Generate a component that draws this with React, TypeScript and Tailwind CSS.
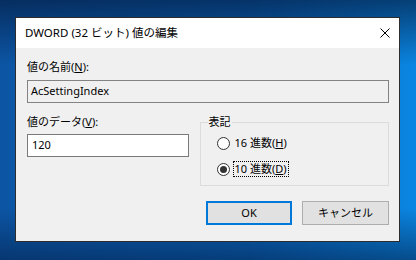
import React from 'react'

const FONT = { fontFamily: '"Noto Sans", "Noto Sans CJK JP", sans-serif' }

function Radio({ checked, label, accel, focused }: { checked?: boolean; label: string; accel: string; focused?: boolean }) {
  return (
    <div className="flex h-[16px] items-center pl-[16px]">
      <div className="flex h-[13px] w-[13px] items-center justify-center rounded-full border border-[#333333] bg-white">
        {checked && <div className="h-[7px] w-[7px] rounded-full bg-[#333333]" />}
      </div>
      <span
        className={`ml-[3px] px-[1px] leading-[14px] border border-dotted ${
          focused ? 'border-black' : 'border-transparent'
        }`}
      >
        {label}(<span className="underline">{accel}</span>)
      </span>
    </div>
  )
}

export default function App() {
  return (
    <div
      className="h-[260px] w-[416px] overflow-hidden pl-[15px] pt-[17px] text-[11px] text-black bg-[linear-gradient(to_bottom,rgba(3,25,60,0.65),rgba(3,25,60,0)_25%,rgba(3,25,60,0)_80%,rgba(3,30,70,0.55)),linear-gradient(to_right,#0c55a4,#0a64bb_60%,#0a86e2)]"
      style={FONT}
    >
      <div className="flex h-[225px] w-[385px] flex-col border border-[#2d2d2d] bg-[#f0f0f0]">
        {/* Title bar */}
        <div className="flex h-[30px] items-center justify-between bg-white pl-[9px] pr-[9px]">
          <span className="text-[11.5px]">DWORD (32 ビット) 値の編集</span>
          <svg width="10" height="10" viewBox="0 0 10 10">
            <path d="M0.5 0.5L9.5 9.5M9.5 0.5L0.5 9.5" stroke="#000" strokeWidth="1" fill="none" />
          </svg>
        </div>

        {/* Body */}
        <div className="flex-1 pl-[11px] pr-[10px] pt-[11px]">
          <div className="leading-4">
            値の名前(<span className="underline">N</span>):
          </div>
          <div className="mt-[5px] flex h-[23px] w-[362px] items-center border border-[#838383] bg-[#f0f0f0] pl-[3px]">
            AcSettingIndex
          </div>

          <div className="mt-[11px] flex items-start">
            <div className="w-[162px]">
              <div className="leading-4">
                値のデータ(<span className="underline">V</span>):
              </div>
              <div className="mt-[4px] flex h-[23px] items-center border border-[#7a7a7a] bg-white pl-[4px]">
                120
              </div>
            </div>

            <fieldset className="ml-[11px] w-[190px] border border-[#dcdcdc] p-0 pb-[8px]">
              <legend className="ml-[7px] px-[1px] leading-4">表記</legend>
              <div className="mt-[5px]">
                <Radio label="16 進数" accel="H" />
              </div>
              <div className="mt-[10px]">
                <Radio checked focused label="10 進数" accel="D" />
              </div>
            </fieldset>
          </div>

          <div className="mt-[15px] flex justify-end gap-[10px]">
            <button className="h-[24px] w-[86px] border-2 border-[#0078d7] bg-[#e1e1e1]">OK</button>
            <button className="h-[24px] w-[87px] border border-[#adadad] bg-[#e1e1e1]">キャンセル</button>
          </div>
        </div>
      </div>
    </div>
  )
}
